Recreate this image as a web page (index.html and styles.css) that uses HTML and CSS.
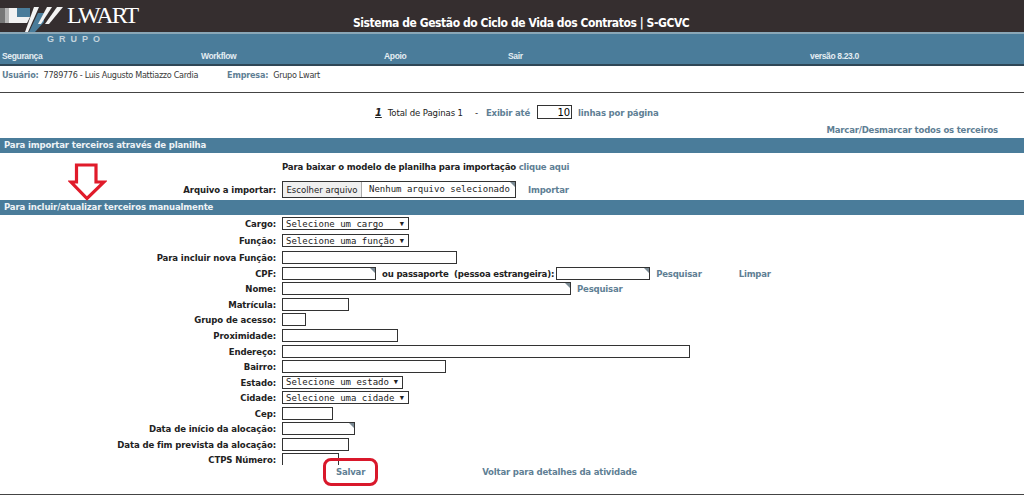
FILE: index.html
```html
<!DOCTYPE html>
<html lang="pt-BR">
<head>
  <meta charset="UTF-8" />
  <title>S-GCVC</title>
  <link rel="stylesheet" href="styles.css">
</head>
<body>

  <header class="topo">
    <div class="logo">
      <svg class="logo-marca" width="66" height="33" viewBox="0 0 66 33">
        <rect x="0" y="8" width="5" height="15" fill="#777" />
        <rect x="5" y="8" width="4" height="15" fill="#b5b5b5" />
        <polygon points="9,8 17,8 17,17 30,17 27,23 9,23" fill="#f2f2f2" />
        <polygon points="17,8 30,8 30,17 17,17" fill="#4a7c9a" />
        <polygon points="34,7 39,7 28,32 25,32" fill="#f4f4f4" />
        <polygon points="38,13 44,13 44,22 35,32 29,32" fill="#4a7c9a" />
        <polygon points="47,7 52,7 41,24 38,24" fill="#f4f4f4" />
        <polygon points="57,7 63,7 49,24 45,24" fill="#f4f4f4" />
      </svg>
      <span class="logo-nome">LWART</span>
      <span class="logo-grupo">GRUPO</span>
    </div>
    <h1>Sistema de Gestão do Ciclo de Vida dos Contratos | S-GCVC</h1>
  </header>

  <nav class="menu">
    <a class="menu-seg">Segurança</a>
    <a class="menu-work">Workflow</a>
    <a class="menu-apoio">Apoio</a>
    <a class="menu-sair">Sair</a>
    <span class="menu-versao">versão 8.23.0</span>
  </nav>

  <div class="usuario">
    <b>Usuário:</b><span class="usuario-nome">7789776 - Luis Augusto Mattiazzo Cardia</span>
    <b class="usuario-emp">Empresa:</b><span class="usuario-nome">Grupo Lwart</span>
  </div>

  <div class="paginacao">
    <b class="pagina-atual">1</b>
    <span class="total">Total de Paginas 1</span>
    <span class="traco">-</span>
    <a class="link">Exibir até</a>
    <input class="campo-linhas" type="text" value="10">
    <a class="link">linhas por página</a>
  </div>

  <div class="marcar"><a class="link">Marcar/Desmarcar todos os terceiros</a></div>

  <h2 class="secao">Para importar terceiros através de planilha</h2>
  <div class="importar">
    <div class="linha-modelo">
      <b>Para baixar o modelo de planilha para importação</b>
      <a class="link">clique aqui</a>
    </div>
    <div class="linha-arquivo">
      <label class="rotulo">Arquivo a importar:</label>
      <div class="arquivo canto">
        <span class="arquivo-btn">Escolher arquivo</span>
        <span class="arquivo-nome">Nenhum arquivo selecionado</span>
      </div>
      <a class="link importar-link">Importar</a>
    </div>
  </div>

  <h2 class="secao">Para incluir/atualizar terceiros manualmente</h2>
  <form class="form">
    <div class="linha alta">
      <label class="rotulo">Cargo:</label>
      <div class="combo combo-cargo">Selecione um cargo<i>▼</i></div>
    </div>
    <div class="linha alta">
      <label class="rotulo">Função:</label>
      <div class="combo combo-cargo">Selecione uma função<i>▼</i></div>
    </div>
    <div class="linha nova-funcao">
      <label class="rotulo">Para incluir nova Função:</label>
      <input class="campo w175" type="text">
    </div>
    <div class="linha">
      <label class="rotulo">CPF:</label>
      <div class="campo w94 canto"></div>
      <b class="passaporte">ou passaporte &nbsp;(pessoa estrangeira):</b>
      <div class="campo w94 canto"></div>
      <a class="link pesquisar">Pesquisar</a>
      <a class="link limpar">Limpar</a>
    </div>
    <div class="linha">
      <label class="rotulo">Nome:</label>
      <div class="campo w289 canto"></div>
      <a class="link pesquisar">Pesquisar</a>
    </div>
    <div class="linha">
      <label class="rotulo">Matrícula:</label>
      <input class="campo w67" type="text">
    </div>
    <div class="linha">
      <label class="rotulo">Grupo de acesso:</label>
      <input class="campo w24" type="text">
    </div>
    <div class="linha">
      <label class="rotulo">Proximidade:</label>
      <input class="campo w116" type="text">
    </div>
    <div class="linha">
      <label class="rotulo">Endereço:</label>
      <input class="campo w408" type="text">
    </div>
    <div class="linha">
      <label class="rotulo">Bairro:</label>
      <input class="campo w164" type="text">
    </div>
    <div class="linha">
      <label class="rotulo">Estado:</label>
      <div class="combo combo-estado">Selecione um estado<i>▼</i></div>
    </div>
    <div class="linha">
      <label class="rotulo">Cidade:</label>
      <div class="combo combo-cidade">Selecione uma cidade<i>▼</i></div>
    </div>
    <div class="linha">
      <label class="rotulo">Cep:</label>
      <input class="campo w51" type="text">
    </div>
    <div class="linha">
      <label class="rotulo">Data de início da alocação:</label>
      <div class="campo w73 canto"></div>
    </div>
    <div class="linha">
      <label class="rotulo">Data de fim prevista da alocação:</label>
      <input class="campo w67" type="text">
    </div>
    <div class="linha">
      <label class="rotulo">CTPS Número:</label>
      <input class="campo w57" type="text">
    </div>
  </form>

  <div class="acoes">
    <a class="link salvar">Salvar</a>
    <a class="link voltar">Voltar para detalhes da atividade</a>
  </div>

  <svg class="seta" width="39" height="39" viewBox="0 0 39 39">
    <path d="M8.5 3 H28 V20 H36 L19 36.5 L3 20 H8.5 Z" fill="#fff" stroke="#e01b2a" stroke-width="3.2" />
  </svg>

</body>
</html>
```

FILE: styles.css
```css
html {
  overflow: hidden;
}
body {
  position: relative;
  margin: 0;
  height: 495px;
  overflow: hidden;
  background: white;
  font-family: "DejaVu Sans Condensed", "DejaVu Sans", sans-serif;
  font-size: 9.5px;
  letter-spacing: -0.1px;
  color: #222;
}
.topo {
  height: 32px;
  display: flex;
  background: #352e2f;
}
.logo {
  position: relative;
  width: 340px;
  height: 32px;
}
.logo-marca {
  display: block;
  position: relative;
  z-index: 1;
}
.logo-nome {
  position: absolute;
  left: 67px;
  top: 2px;
  font-family: "Liberation Serif", serif;
  font-size: 24px;
  letter-spacing: -1.8px;
  color: white;
}
.logo-grupo {
  position: absolute;
  left: 47px;
  top: 34px;
  font-family: "Liberation Sans", sans-serif;
  font-weight: bold;
  font-size: 9px;
  letter-spacing: 5px;
  color: #c3d3dc;
  z-index: 1;
}
.topo h1 {
  margin: 16px 0 0 13px;
  font-size: 12px;
  letter-spacing: -0.43px;
  line-height: 15px;
  color: white;
}
.menu {
  position: relative;
  height: 30px;
  background: #4a7c9a;
  border-top: 2px solid #8aa7b7;
  border-bottom: 2px solid #2f4656;
  font-family: "Liberation Sans", sans-serif;
  font-size: 8.5px;
  letter-spacing: -0.35px;
  font-weight: bold;
  color: #e4edf2;
}
.menu a, .menu span {
  position: absolute;
  top: 17px;
}
.menu-seg { left: 2px; }
.menu-work { left: 201px; }
.menu-apoio { left: 384px; }
.menu-sair { left: 508px; }
.menu-versao { left: 810px; }
.usuario {
  display: flex;
  height: 27px;
  padding: 4px 0 0 2px;
  box-sizing: border-box;
  border-bottom: 1px solid #444;
  font-size: 9px;
  letter-spacing: -0.3px;
  color: #3a3a3a;
}
.usuario b {
  color: #5f7f95;
  letter-spacing: -0.2px;
}
.usuario-nome {
  margin-left: 5px;
}
.usuario-emp {
  margin-left: 29px;
}
.link {
  font-weight: bold;
  letter-spacing: -0.2px;
  color: #5f7f95;
}
.paginacao {
  display: flex;
  align-items: center;
  height: 18px;
  margin-top: 10px;
  padding-left: 375px;
}
.pagina-atual {
  font-style: italic;
  text-decoration: underline;
  font-size: 11px;
}
.total {
  margin-left: 6px;
}
.traco {
  margin: 0 8px 0 12px;
}
.campo-linhas {
  width: 35px;
  height: 14px;
  margin: 0 6px 0 7px;
  padding: 0 1px;
  box-sizing: border-box;
  border: 1px solid #333;
  text-align: right;
  font: 10px "DejaVu Sans", sans-serif;
}
.marcar {
  height: 17px;
  padding-right: 26px;
  text-align: right;
  line-height: 18px;
}
.secao {
  margin: 0;
  height: 15px;
  padding-left: 4px;
  background: #4a7c9a;
  font-size: 9.5px;
  letter-spacing: -0.15px;
  line-height: 14px;
  color: #eef3f6;
}
.importar {
  height: 47px;
  padding-top: 8px;
  box-sizing: border-box;
}
.linha-modelo {
  padding-left: 282px;
  height: 20px;
}
.linha-modelo b {
  letter-spacing: -0.15px;
}
.linha-arquivo {
  display: flex;
  align-items: center;
  height: 17px;
}
.rotulo {
  width: 276px;
  margin-right: 6px;
  text-align: right;
  font-weight: bold;
}
.arquivo {
  position: relative;
  display: flex;
  width: 234px;
  height: 17px;
  box-sizing: border-box;
  border: 1px solid #333;
}
.arquivo-btn {
  width: 78px;
  background: #efefef;
  border-right: 1px solid #aaa;
  text-align: center;
  letter-spacing: 0;
  line-height: 15px;
}
.arquivo-nome {
  padding-left: 7px;
  font-family: "DejaVu Sans Mono", monospace;
  font-size: 9px;
  letter-spacing: 0;
  line-height: 15px;
}
.importar-link {
  margin-left: 12px;
}
.form {
  height: 250px;
  overflow: hidden;
}
.linha {
  display: flex;
  align-items: center;
  height: 15.55px;
}
.alta {
  height: 17px;
}
.nova-funcao {
  margin-top: 1px;
}
.combo {
  display: flex;
  justify-content: space-between;
  align-items: center;
  height: 13px;
  padding: 0 4px 0 3px;
  box-sizing: border-box;
  border: 1px solid #333;
  font-family: "DejaVu Sans Mono", monospace;
  font-size: 9px;
  letter-spacing: 0;
}
.combo i {
  font-style: normal;
  font-size: 7px;
}
.combo-cargo { width: 127px; }
.combo-estado { width: 121px; }
.combo-cidade { width: 127px; }
.campo {
  position: relative;
  height: 13px;
  padding: 0;
  box-sizing: border-box;
  border: 1px solid #333;
}
.canto::after {
  content: "";
  position: absolute;
  top: 0;
  right: 0;
  border-top: 5px solid #7a8a94;
  border-left: 5px solid transparent;
}
.w24 { width: 24px; }
.w51 { width: 51px; }
.w57 { width: 57px; }
.w67 { width: 67px; }
.w73 { width: 73px; }
.w94 { width: 94px; }
.w116 { width: 116px; }
.w164 { width: 164px; }
.w175 { width: 175px; }
.w289 { width: 289px; }
.w408 { width: 408px; }
.passaporte {
  margin: 0 2px 0 6px;
  letter-spacing: -0.18px;
}
.pesquisar {
  margin-left: 6px;
}
.limpar {
  margin-left: 37px;
}
.acoes {
  display: flex;
  align-items: flex-start;
  height: 30px;
  padding: 1px 0 0 336px;
  box-sizing: border-box;
  border-bottom: 1px solid #444;
  line-height: 12px;
}
.voltar {
  margin-left: 117px;
}
.salvar {
  position: relative;
}
.salvar::after {
  content: "";
  position: absolute;
  left: -13px;
  top: -8px;
  width: 49px;
  height: 22px;
  border: 3px solid #d9182b;
  border-radius: 8px;
}
.seta {
  position: absolute;
  left: 68px;
  top: 162px;
}
```
